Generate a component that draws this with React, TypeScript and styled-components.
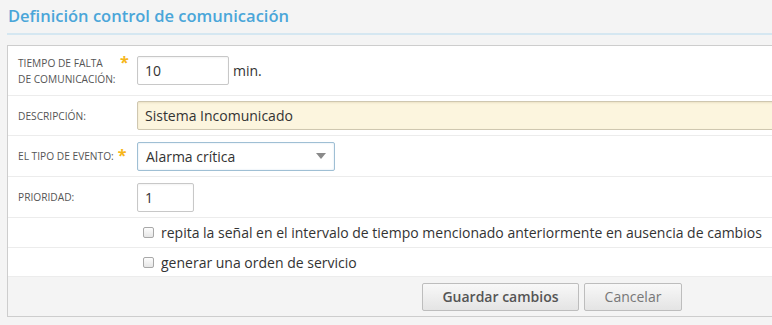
import React from 'react';
import styled, { createGlobalStyle } from 'styled-components';

const GlobalStyle = createGlobalStyle`
  html, body {
    margin: 0;
    padding: 0;
    background: #f4f4f4;
  }
  body {
    font-family: "Open Sans", "Liberation Sans", sans-serif;
    color: #333;
  }
`;

const Page = styled.div`
  width: 772px;
  overflow: hidden;
  padding: 0 0 0 7px;
  box-sizing: border-box;
`;

const Header = styled.div`
  padding: 4px 0 0 1px;
  height: 29px;
  border-bottom: 2px solid #d5e7f1;
  margin-right: -40px;
`;

const Title = styled.h1`
  margin: 0;
  font-size: 16.5px;
  line-height: 24px;
  font-weight: 600;
  color: #4aa6d9;
`;

const Panel = styled.div`
  margin-top: 10px;
  margin-right: -300px;
  background: #fff;
  border: 1px solid #cdcdcd;
  border-right: none;
`;

const Row = styled.div<{ $h: number }>`
  display: flex;
  align-items: center;
  height: ${p => p.$h}px;
  padding-left: 10px;
  border-bottom: 1px solid #ececec;
`;

const Label = styled.div`
  width: 119px;
  flex-shrink: 0;
  display: flex;
  align-items: flex-start;
  font-size: 10.2px;
  line-height: 16px;
  text-transform: uppercase;
  color: #555;
`;

const LabelText = styled.span`
  max-width: 98px;
`;

const Star = styled.span`
  color: #f6b619;
  font-size: 16px;
  line-height: 14px;
  margin-left: 4px;
  font-weight: 700;
`;

const TextInput = styled.div<{ $w: number; $note?: boolean }>`
  box-sizing: border-box;
  width: ${p => p.$w}px;
  height: 29px;
  padding: 0 7px;
  display: flex;
  align-items: center;
  font-size: 14px;
  color: #333;
  background: ${p => (p.$note ? '#fcf5de' : '#fff')};
  border: 1px solid ${p => (p.$note ? '#cfc7b0' : '#c8c8c8')};
  border-radius: 2px;
  box-shadow: inset 0 1px 2px ${p => (p.$note ? 'rgba(160,140,90,0.18)' : 'rgba(0,0,0,0.05)')};
`;

const Unit = styled.span`
  margin-left: 4px;
  font-size: 14px;
  color: #333;
`;

const Select = styled.div`
  box-sizing: border-box;
  width: 198px;
  height: 29px;
  padding: 0 8px;
  display: flex;
  align-items: center;
  justify-content: space-between;
  font-size: 14px;
  color: #333;
  background: #fff;
  border: 1px solid #9fbfd4;
  border-radius: 2px;
  box-shadow: inset 0 0 2px rgba(120, 170, 210, 0.35);
`;

const CheckRow = styled.label`
  display: flex;
  align-items: center;
  padding-left: 125px;
  font-size: 14px;
  color: #333;
`;

const Box = styled.span`
  box-sizing: border-box;
  width: 11px;
  height: 11px;
  margin-right: 7px;
  border: 1px solid #a8a8a8;
  border-radius: 2px;
  background: linear-gradient(#fdfdfd, #e6e6e6);
`;

const Footer = styled.div`
  display: flex;
  gap: 5px;
  height: 39px;
  align-items: center;
  padding-left: 414px;
  background: #f4f4f4;
`;

const Button = styled.button<{ $w: number; $primary?: boolean }>`
  width: ${p => p.$w}px;
  height: 28px;
  font-family: "Open Sans", "Liberation Sans", sans-serif;
  font-size: 14px;
  font-weight: ${p => (p.$primary ? 600 : 400)};
  color: ${p => (p.$primary ? '#555' : '#777')};
  background: linear-gradient(#f8f8f8, #e4e4e4);
  border: 1px solid #bdbdbd;
  border-radius: 2px;
  padding: 0;
`;

const Arrow = () => (
  <svg width="10" height="6" viewBox="0 0 10 6">
    <path d="M0 0h10L5 6z" fill="#8a8a8a" />
  </svg>
);

export default function App() {
  return (
    <>
      <GlobalStyle />
      <Page>
        <Header>
          <Title>Definición control de comunicación</Title>
        </Header>
        <Panel>
          <Row $h={49}>
            <Label>
              <LabelText>Tiempo de falta de comunicación:</LabelText>
              <Star>*</Star>
            </Label>
            <TextInput $w={92}>10</TextInput>
            <Unit>min.</Unit>
          </Row>
          <Row $h={39}>
            <Label>
              <LabelText>Descripción:</LabelText>
            </Label>
            <TextInput $w={700} $note>Sistema Incomunicado</TextInput>
          </Row>
          <Row $h={40}>
            <Label>
              <LabelText>El tipo de evento:</LabelText>
              <Star>*</Star>
            </Label>
            <Select>
              <span>Alarma crítica</span>
              <Arrow />
            </Select>
          </Row>
          <Row $h={40}>
            <Label>
              <LabelText>Prioridad:</LabelText>
            </Label>
            <TextInput $w={57}>1</TextInput>
          </Row>
          <Row $h={29}>
            <CheckRow>
              <Box />
              repita la señal en el intervalo de tiempo mencionado anteriormente en ausencia de cambios
            </CheckRow>
          </Row>
          <Row $h={28}>
            <CheckRow>
              <Box />
              generar una orden de servicio
            </CheckRow>
          </Row>
          <Footer>
            <Button $w={157} $primary>Guardar cambios</Button>
            <Button $w={98}>Cancelar</Button>
          </Footer>
        </Panel>
      </Page>
    </>
  );
}
